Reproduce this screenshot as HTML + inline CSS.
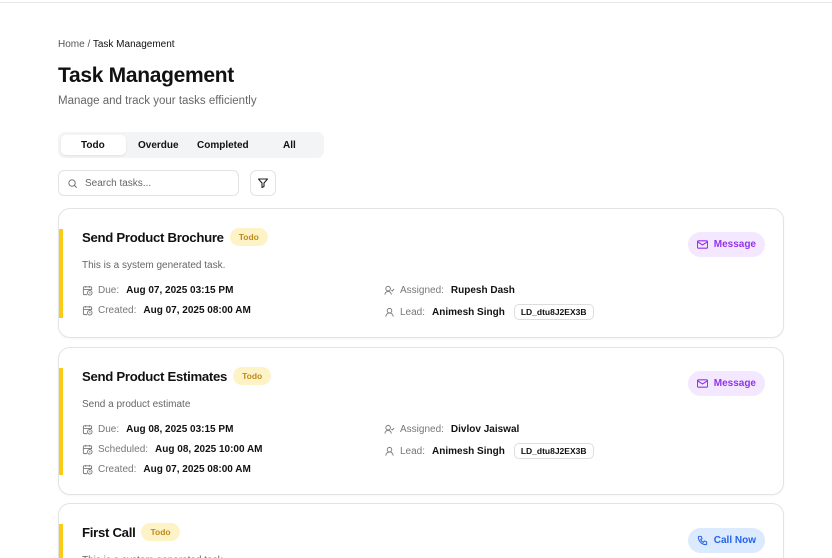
<!DOCTYPE html>
<html><head><meta charset="utf-8"><style>
*{box-sizing:border-box;margin:0;padding:0}
html,body{width:832px;height:558px;overflow:hidden}
body{background:#fff;font-family:"Liberation Sans",sans-serif;color:#111;position:relative}
.top{position:absolute;left:0;top:0;width:832px;height:3px;border-bottom:1px solid #e8e8e8}
.a{position:absolute;white-space:nowrap}
.card{position:absolute;left:58px;width:726px;border:1px solid #e3e3e3;border-radius:12px;background:#fff;box-shadow:0 1px 2px rgba(0,0,0,.04)}
.bar{position:absolute;left:0;width:4px;background:#facc15}
.th{display:flex;align-items:center;gap:6px}
.title{font-size:13.2px;font-weight:bold;letter-spacing:-.3px}
.badge{display:inline-block;background:#fef3c7;color:#c08a1a;font-size:8.5px;border-radius:10px;padding:4px 9px;font-weight:bold}
.desc{font-size:10px;color:#666}
.row{font-size:10px;color:#777;display:flex;align-items:center;gap:5px}
.row b{color:#111;margin-left:2px}
.code{display:inline-block;border:1px solid #ddd;border-radius:5px;padding:2px 6px;font-size:8.5px;color:#111;margin-left:4px;font-weight:bold}
.btn{position:absolute;right:18px;height:25px;border-radius:13px;font-size:10px;display:flex;align-items:center;gap:6px;padding:0 9px;font-weight:bold}
.msg{background:#f3e8ff;color:#9333ea}
.call{background:#dbeafe;color:#2563eb}
svg{display:block}
</style></head><body>
<svg width="0" height="0" style="position:absolute"><defs>
<symbol id="cal" viewBox="0 0 24 24"><g fill="none" stroke="#777" stroke-width="2"><path d="M11 21H5a2 2 0 01-2-2V6a2 2 0 012-2h14a2 2 0 012 2v5M16 2v4M8 2v4M3 10h18"/><circle cx="17" cy="17" r="5"/><path d="M17 15v2l1 1"/></g></symbol>
<symbol id="usr" viewBox="0 0 24 24"><g fill="none" stroke="#777" stroke-width="2"><circle cx="12" cy="8" r="5"/><path d="M20 21a8 8 0 00-16 0"/></g></symbol>
<symbol id="usc" viewBox="0 0 24 24"><g fill="none" stroke="#777" stroke-width="2"><circle cx="9" cy="8" r="5"/><path d="M2 21a7 7 0 0114 0M16 11l2 2 4-4"/></g></symbol>
</defs></svg>
<div class="top"></div>
<div class="a" style="left:58px;top:39px;font-size:10px;color:#555">Home / <span style="color:#111">Task Management</span></div>
<div class="a" style="left:58px;top:64px;font-size:21px;font-weight:bold;letter-spacing:-.3px">Task Management</div>
<div class="a" style="left:58px;top:95px;font-size:11.5px;color:#666">Manage and track your tasks efficiently</div>
<div class="a" style="left:58px;top:132px;width:266px;height:26px;background:#f3f4f6;border-radius:7px"></div>
<div class="a" style="left:61px;top:135px;width:65px;height:20px;background:#fff;border-radius:5px;box-shadow:0 1px 2px rgba(0,0,0,.08)"></div>
<div class="a" style="left:81px;top:140px;font-size:10px;font-weight:bold">Todo</div>
<div class="a" style="left:138px;top:140px;font-size:10px;font-weight:bold">Overdue</div>
<div class="a" style="left:197px;top:140px;font-size:10px;font-weight:bold">Completed</div>
<div class="a" style="left:283px;top:140px;font-size:10px;font-weight:bold">All</div>
<div class="a" style="left:58px;top:170px;width:181px;height:26px;border:1px solid #e3e3e3;border-radius:6px"></div>
<svg class="a" style="left:67px;top:178px" width="11" height="11" viewBox="0 0 24 24" fill="none" stroke="#666" stroke-width="2"><circle cx="11" cy="11" r="7"/><path d="M21 21l-5-5"/></svg>
<div class="a" style="left:85px;top:178px;font-size:10px;color:#666">Search tasks...</div>
<div class="a" style="left:250px;top:170px;width:26px;height:26px;border:1px solid #e3e3e3;border-radius:6px"></div>
<svg class="a" style="left:257px;top:177px" width="12" height="12" viewBox="0 0 24 24" fill="none" stroke="#222" stroke-width="2.2" stroke-linejoin="round"><path d="M3 4h18l-7 8v7l-4 2v-9z"/></svg>

<div class="card" style="top:208px;height:130px">
 <div class="bar" style="top:20px;height:89px"></div>
 <div class="a th" style="left:23px;top:19px"><span class="title">Send Product Brochure</span><span class="badge">Todo</span></div>
 <div class="a desc" style="left:23px;top:51px">This is a system generated task.</div>
 <div class="a row" style="left:23px;top:76px"><svg width="11" height="11"><use href="#cal"/></svg><span>Due:</span> <b>Aug 07, 2025 03:15 PM</b></div>
 <div class="a row" style="left:23px;top:96px"><svg width="11" height="11"><use href="#cal"/></svg><span>Created:</span> <b>Aug 07, 2025 08:00 AM</b></div>
 <div class="a row" style="left:325px;top:76px"><svg width="11" height="11"><use href="#usc"/></svg><span>Assigned:</span> <b>Rupesh Dash</b></div>
 <div class="a row" style="left:325px;top:95px"><svg width="11" height="11"><use href="#usr"/></svg><span>Lead:</span> <b>Animesh Singh</b><span class="code">LD_dtu8J2EX3B</span></div>
 <div class="btn msg" style="top:23px"><svg width="11" height="9" viewBox="0 0 24 18" fill="none" stroke="#9333ea" stroke-width="2.4"><rect x="1" y="1" width="22" height="16" rx="2"/><path d="M1 3l11 7 11-7"/></svg>Message</div>
</div>

<div class="card" style="top:347px;height:148px">
 <div class="bar" style="top:20px;height:107px"></div>
 <div class="a th" style="left:23px;top:19px"><span class="title">Send Product Estimates</span><span class="badge">Todo</span></div>
 <div class="a desc" style="left:23px;top:51px">Send a product estimate</div>
 <div class="a row" style="left:23px;top:76px"><svg width="11" height="11"><use href="#cal"/></svg><span>Due:</span> <b>Aug 08, 2025 03:15 PM</b></div>
 <div class="a row" style="left:23px;top:96px"><svg width="11" height="11"><use href="#cal"/></svg><span>Scheduled:</span> <b>Aug 08, 2025 10:00 AM</b></div>
 <div class="a row" style="left:23px;top:116px"><svg width="11" height="11"><use href="#cal"/></svg><span>Created:</span> <b>Aug 07, 2025 08:00 AM</b></div>
 <div class="a row" style="left:325px;top:76px"><svg width="11" height="11"><use href="#usc"/></svg><span>Assigned:</span> <b>Divlov Jaiswal</b></div>
 <div class="a row" style="left:325px;top:95px"><svg width="11" height="11"><use href="#usr"/></svg><span>Lead:</span> <b>Animesh Singh</b><span class="code">LD_dtu8J2EX3B</span></div>
 <div class="btn msg" style="top:23px"><svg width="11" height="9" viewBox="0 0 24 18" fill="none" stroke="#9333ea" stroke-width="2.4"><rect x="1" y="1" width="22" height="16" rx="2"/><path d="M1 3l11 7 11-7"/></svg>Message</div>
</div>

<div class="card" style="top:503px;height:100px">
 <div class="bar" style="top:20px;height:60px"></div>
 <div class="a th" style="left:23px;top:19px"><span class="title">First Call</span><span class="badge">Todo</span></div>
 <div class="a desc" style="left:23px;top:51px">This is a system generated task.</div>
 <div class="btn call" style="top:24px"><svg width="11" height="11" viewBox="0 0 24 24" fill="none" stroke="#2563eb" stroke-width="2.2"><path d="M5 3h4l2 5-3 2a11 11 0 006 6l2-3 5 2v4a2 2 0 01-2 2A17 17 0 013 5a2 2 0 012-2z"/></svg>Call Now</div>
</div>
</body></html>
